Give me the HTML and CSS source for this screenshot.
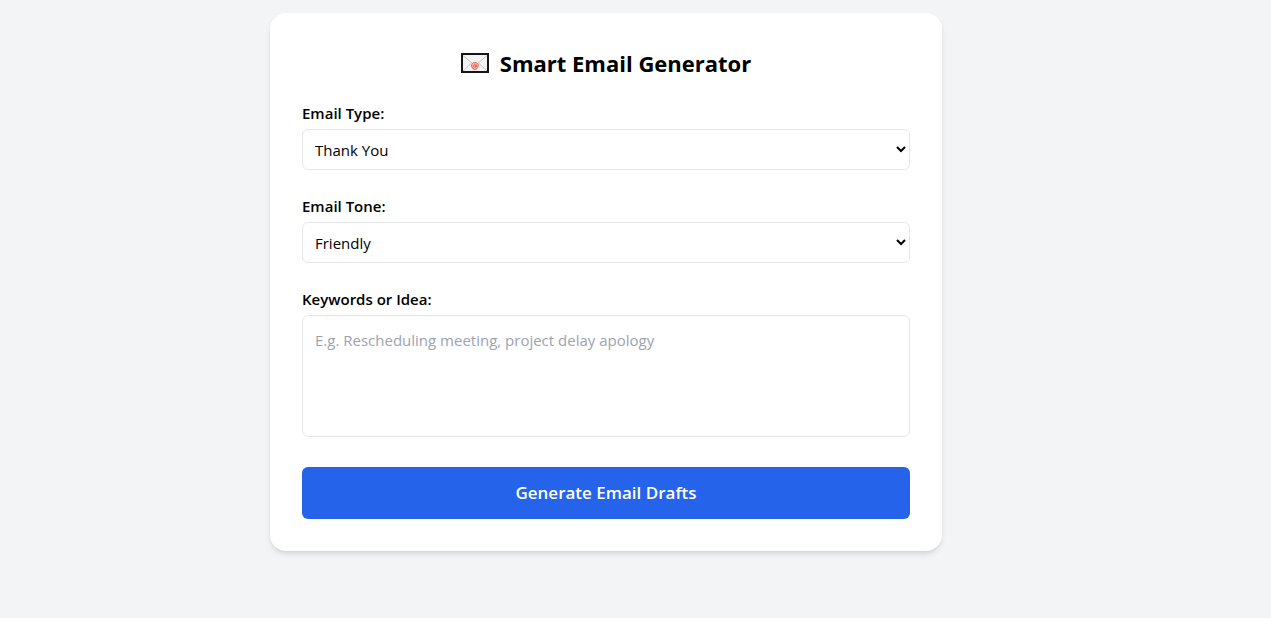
FILE: index.html
```
<!DOCTYPE html>
<html lang="en">
<head>
<meta charset="utf-8">
<meta name="viewport" content="width=device-width, initial-scale=1">
<title>Smart Email Generator</title>
<link rel="stylesheet" href="styles.css">
</head>
<body>
<main class="page">
  <form class="card">
    <h1 class="title">
      <svg class="title-icon" viewBox="0 0 28 20" aria-hidden="true">
        <rect x="1" y="1" width="26" height="18" fill="#f3f3f3" stroke="#151515" stroke-width="2"/>
        <path d="M2 18 10.500 10M26 18 17.500 10M2 2.500l10.500 9q1.500 1 3 0L26 2.500" fill="none" stroke="#c4c4c4" stroke-width="1"/>
        <circle cx="14" cy="13" r="3.600" fill="#fbc4bb"/>
        <circle cx="13.800" cy="13" r="1.300" fill="none" stroke="#e94b35" stroke-width=".9"/>
        <path d="M15.200 11.500v2q.4 1 1.400.5.900-1.200.5-2.400a3.400 3.400 0 1 0-1.300 4.200" fill="none" stroke="#e94b35" stroke-width=".9"/>
      </svg>
      <span>Smart Email Generator</span>
    </h1>
    <div class="field">
      <label class="label" for="type">Email Type:</label>
      <select class="control select" id="type">
        <option>Thank You</option>
        <option>Apology</option>
        <option>Follow Up</option>
      </select>
    </div>
    <div class="field">
      <label class="label" for="tone">Email Tone:</label>
      <select class="control select" id="tone">
        <option>Friendly</option>
        <option>Formal</option>
      </select>
    </div>
    <div class="field">
      <label class="label" for="keywords">Keywords or Idea:</label>
      <textarea class="control textarea" id="keywords" rows="4" placeholder="E.g. Rescheduling meeting, project delay apology"></textarea>
    </div>
    <button class="submit" type="button">Generate Email Drafts</button>
  </form>
</main>
</body>
</html>
```
FILE: styles.css
```
* {
  box-sizing: border-box;
}

body {
  margin: 0;
  min-height: 100vh;
  background: #f3f4f6;
  color: #000;
  font-family: "Segoe UI", "Open Sans", "Noto Sans", sans-serif;
  font-size: 15px;
  line-height: 24px;
}

.page {
  display: flex;
  justify-content: center;
  padding: 13px 59px 32px 0;
}

.card {
  display: flex;
  flex-direction: column;
  gap: 24px;
  width: 100%;
  max-width: 672px;
  padding: 32px;
  border-radius: 16px;
  background: #fff;
  box-shadow: 0 4px 6px -1px rgba(0, 0, 0, 0.1), 0 2px 4px -2px rgba(0, 0, 0, 0.1);
}

.title {
  display: flex;
  align-items: center;
  justify-content: center;
  gap: 11px;
  margin: 0;
  padding-top: 4px;
  font-size: 22px;
  font-weight: 700;
  line-height: 28px;
}

.title-icon {
  width: 28px;
  height: 20px;
}

.field {
  display: flex;
  flex-direction: column;
  gap: 4px;
}

.label {
  font-weight: 600;
}

.control {
  width: 100%;
  border: 1px solid #e5e7eb;
  border-radius: 6px;
  background: #fff;
  color: #000;
  font: inherit;
}

.select {
  height: 41px;
  padding: 8px;
}

.textarea {
  height: 122px;
  margin-bottom: 6px;
  padding: 12px;
  resize: none;
}

.textarea::placeholder {
  color: #9ca3af;
}

.submit {
  padding: 12px;
  border: 0;
  border-radius: 6px;
  background: #2563eb;
  color: #fff;
  font: inherit;
  font-size: 17px;
  font-weight: 600;
  line-height: 28px;
  cursor: pointer;
}
```
